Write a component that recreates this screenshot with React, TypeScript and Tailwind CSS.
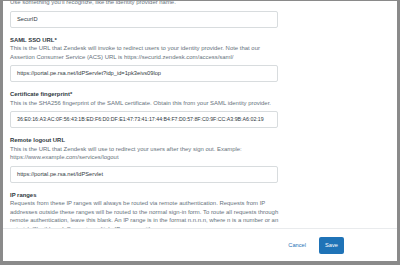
import React from "react";

const font = "font-['Liberation_Sans',Arial,sans-serif]";

function Field({
  label,
  hint,
  value,
  valueSize = "text-[5.7px]",
}: {
  label: string;
  hint: React.ReactNode;
  value: string;
  valueSize?: string;
}) {
  return (
    <div className="mt-[8px]">
      <div className="text-[5.9px] font-bold leading-[8.5px] text-[#2f3941]">{label}</div>
      <div className="text-[5.95px] leading-[8.5px] text-[#68737d]">{hint}</div>
      <div
        className={`mt-[4px] flex h-[17px] w-[268px] items-center whitespace-nowrap rounded-[2px] border border-[#d8dcde] px-[6px] text-[#2f3941] ${valueSize}`}
      >
        {value}
      </div>
    </div>
  );
}

export default function App() {
  return (
    <div className={`h-[265px] w-[400px] bg-[#8a8a8a] px-[3px] pt-px pb-[4px] ${font}`}>
      <div className="flex h-full flex-col bg-white">
        <div className="h-[228px] overflow-hidden border-b border-[#e9ebed]">
          <div className="-mt-[3px] ml-[7px] w-[272px]">
            <div className="text-[5.95px] leading-[8.5px] text-[#68737d]">
              Use something you'll recognize, like the identity provider name.
            </div>
            <div className="mt-[4px] flex h-[17px] w-[268px] items-center rounded-[2px] border border-[#d8dcde] px-[6px] text-[5.7px] text-[#2f3941]">
              SecurID
            </div>
            <Field
              label="SAML SSO URL*"
              hint="This is the URL that Zendesk will invoke to redirect users to your identity provider. Note that our Assertion Consumer Service (ACS) URL is https://securid.zendesk.com/access/saml/"
              value="https://portal.pe.rsa.net/IdPServlet?idp_id=1pk3eivs09lop"
            />
            <Field
              label="Certificate fingerprint*"
              hint="This is the SHA256 fingerprint of the SAML certificate. Obtain this from your SAML identity provider."
              value="36:E0:16:A3:AC:0F:56:43:1B:ED:F6:D0:DF:E1:47:73:41:17:44:B4:F7:D0:57:8F:C0:9F:CC:A3:9B:A6:02:19"
              valueSize="text-[5.25px]"
            />
            <Field
              label="Remote logout URL"
              hint="This is the URL that Zendesk will use to redirect your users after they sign out. Example: https://www.example.com/services/logout"
              value="https://portal.pe.rsa.net/IdPServlet"
            />
            <div className="mt-[8px]">
              <div className="text-[5.9px] font-bold leading-[8.5px] text-[#2f3941]">IP ranges</div>
              <div className="text-[5.95px] leading-[8.5px] text-[#68737d]">
                Requests from these IP ranges will always be routed via remote authentication. Requests from IP
                addresses outside these ranges will be routed to the normal sign-in form. To route all requests through
                remote authentication, leave this blank. An IP range is in the format n.n.n.n, where n is a number or an
                asterisk (*) wild card. Separate multiple IP ranges with a space.
              </div>
            </div>
          </div>
        </div>
        <div className="flex flex-1 items-center justify-end gap-[13px] pr-[53px]">
          <button className="text-[5.7px] text-[#1f73b7]">Cancel</button>
          <button className="h-[17px] w-[25px] rounded-[2px] bg-[#1f73b7] text-[5.7px] text-white">Save</button>
        </div>
      </div>
    </div>
  );
}
